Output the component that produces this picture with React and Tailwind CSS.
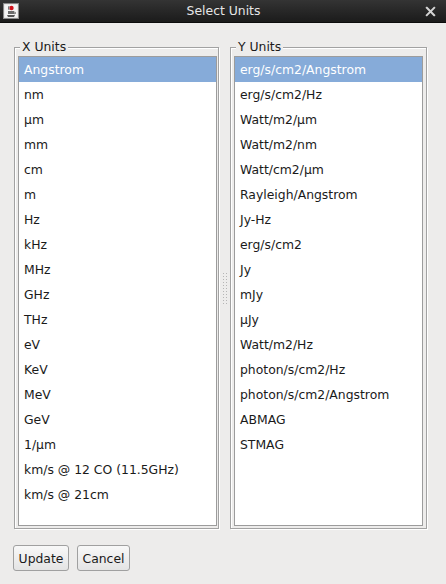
import React from 'react';

const xUnits = ['Angstrom', 'nm', 'µm', 'mm', 'cm', 'm', 'Hz', 'kHz', 'MHz', 'GHz', 'THz', 'eV', 'KeV', 'MeV', 'GeV', '1/µm', 'km/s @ 12 CO (11.5GHz)', 'km/s @ 21cm'];
const yUnits = ['erg/s/cm2/Angstrom', 'erg/s/cm2/Hz', 'Watt/m2/µm', 'Watt/m2/nm', 'Watt/cm2/µm', 'Rayleigh/Angstrom', 'Jy-Hz', 'erg/s/cm2', 'Jy', 'mJy', 'µJy', 'Watt/m2/Hz', 'photon/s/cm2/Hz', 'photon/s/cm2/Angstrom', 'ABMAG', 'STMAG'];

function JavaIcon() {
    return (
        <svg width="16" height="16" viewBox="0 0 16 16">
            <rect x="0.5" y="0.5" width="15" height="15" fill="#dcdcdc" stroke="#8a8a8a" />
            <rect x="1.5" y="1.5" width="13" height="13" fill="#f4f4f4" />
            <path d="M4 12 L12 12 L11 14 L5 14 Z" fill="#555" />
            <path d="M5 8 L11 8 L11 11 L5 11 Z" fill="#6b6b6b" />
            <path d="M11 9 Q13 9 12.5 10.5 L11 10.8" fill="none" stroke="#555" strokeWidth="0.8" />
            <circle cx="8.5" cy="5" r="2.2" fill="#d0121b" />
            <path d="M6 3 Q5 5 6 7" fill="none" stroke="#444" strokeWidth="0.8" />
        </svg>
    );
}

function UnitList({ label, items, boxW, listW, padR }) {
    return (
        <div
            className={`relative h-[482px] border border-[#a2a2a2] shadow-[1px_1px_0_#ffffff,inset_1px_1px_0_#ffffff] pt-[8px] pl-[3px] flex flex-col ${boxW} ${padR}`}
        >
            <span className="absolute left-[5px] top-[-9px] px-[2px] bg-[#edeceb] leading-[16px] text-[#1a1a1a]">{label}</span>
            <div className={`${listW} h-[470px] bg-white border border-[#9c9c9c]`}>
                {items.map((u, i) => (
                    <div
                        key={u}
                        className={`h-[25px] leading-[25px] pl-[5px] whitespace-nowrap ${i === 0 ? 'bg-[#86abd9] text-white' : 'text-[#1a1a1a]'}`}
                    >
                        {u}
                    </div>
                ))}
            </div>
        </div>
    );
}

function Grip() {
    return (
        <div className="grid grid-cols-2 gap-x-[2px] gap-y-[2px]">
            {Array.from({ length: 22 }).map((_, i) => (
                <div key={i} className="w-[1px] h-[1px] bg-[#b5b5b5]" />
            ))}
        </div>
    );
}

export default function App() {
    return (
        <div
            className="w-[446px] h-[584px] bg-[#edeceb] flex flex-col text-[12.4px] overflow-hidden"
            style={{ fontFamily: '"DejaVu Sans", sans-serif' }}
        >
            {/* Title bar */}
            <div className="h-[23px] bg-gradient-to-b from-[#343434] to-[#1b1b1b] border-b border-[#0c0c0c] flex items-center px-[3px] relative">
                <JavaIcon />
                <div className="flex-1 text-center text-[#e6e6e6] text-[12.4px] leading-[22px] pl-[3px]">Select Units</div>
                <svg width="11" height="11" viewBox="0 0 12 12" className="mr-[7px]">
                    <path d="M2 2 L10 10 M10 2 L2 10" stroke="#d4d4d4" strokeWidth="2.2" strokeLinecap="square" />
                </svg>
            </div>

            {/* Split pane */}
            <div className="flex pl-[14px] pt-[24px]">
                <UnitList label="X Units" items={xUnits} boxW="w-[205px]" listW="w-[199px]" padR="pr-[1px]" />
                <div className="w-[11px] h-[482px] flex items-center justify-center">
                    <Grip />
                </div>
                <UnitList label="Y Units" items={yUnits} boxW="w-[197px]" listW="w-[189px]" padR="pr-[3px]" />
            </div>

            {/* Buttons */}
            <div className="flex gap-[8px] pl-[13px] pt-[16px]">
                <button className="h-[26px] w-[56px] rounded-[3px] border border-[#a0a0a0] bg-gradient-to-b from-[#f8f8f8] to-[#e4e4e4] text-[#1a1a1a] leading-[24px] pt-[1px]">Update</button>
                <button className="h-[26px] w-[53px] rounded-[3px] border border-[#a0a0a0] bg-gradient-to-b from-[#f8f8f8] to-[#e4e4e4] text-[#1a1a1a] leading-[24px] pt-[1px]">Cancel</button>
            </div>
        </div>
    );
}
